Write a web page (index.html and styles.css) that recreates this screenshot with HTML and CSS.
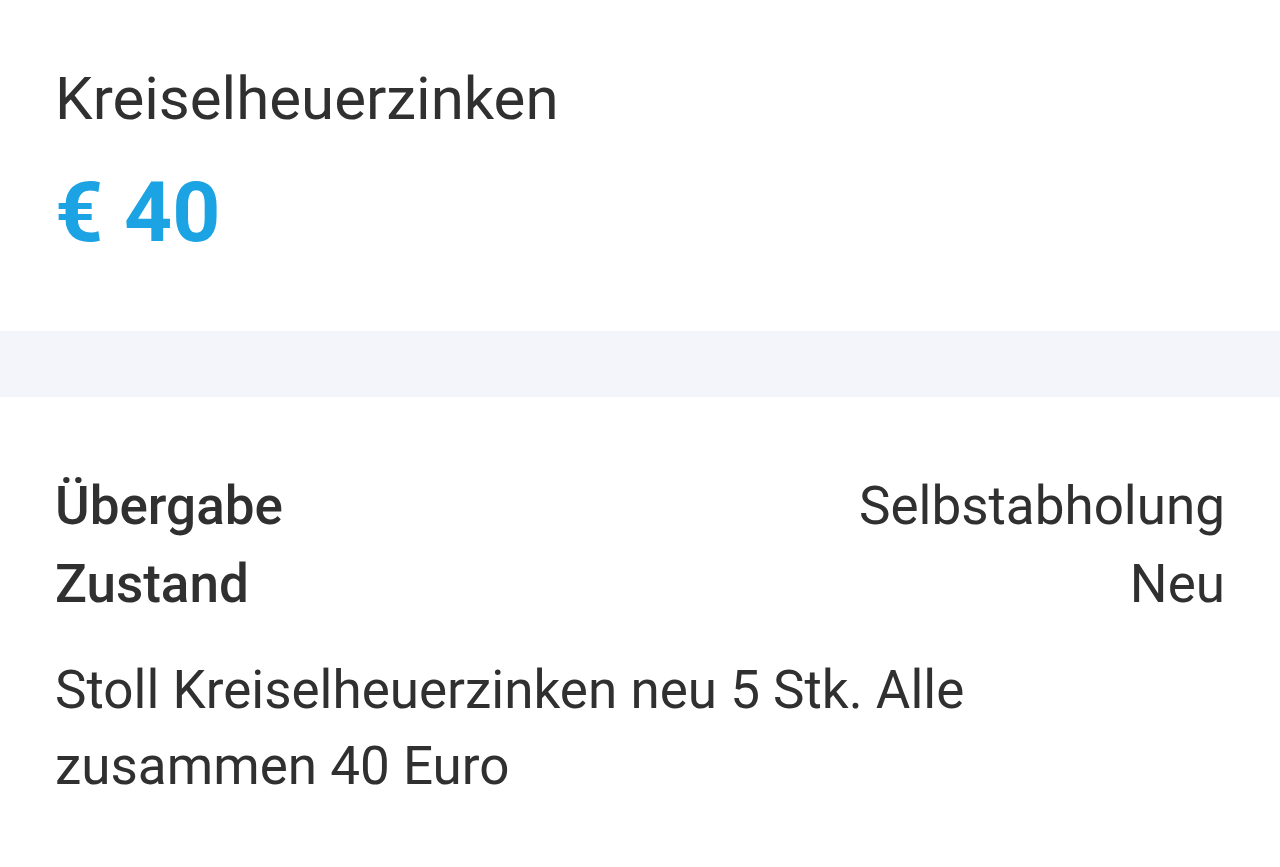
FILE: index.html
```html
<!DOCTYPE html>
<html lang="de">
<head>
<meta charset="utf-8">
<title>Kreiselheuerzinken</title>
<link rel="stylesheet" href="styles.css">
</head>
<body>
<section class="head">
  <h1 class="title">Kreiselheuerzinken</h1>
  <div class="price">€ 40</div>
</section>
<div class="band"></div>
<section class="details">
  <div class="row"><span class="label">Übergabe</span><span class="value">Selbstabholung</span></div>
  <div class="row"><span class="label">Zustand</span><span class="value">Neu</span></div>
  <p class="desc">Stoll Kreiselheuerzinken neu 5 Stk. Alle zusammen 40 Euro</p>
</section>
</body>
</html>
```
FILE: styles.css
```css
html, body {
  margin: 0;
  padding: 0;
  background: #ffffff;
}
body {
  font-family: Roboto, "Noto Sans", sans-serif;
  color: #303030;
}
.head {
  padding: 59px 55px 68px;
}
.title {
  margin: 0;
  font-size: 60px;
  line-height: 80px;
  font-weight: 400;
}
.price {
  margin-top: 24px;
  font-size: 84px;
  line-height: 100px;
  font-weight: 700;
  color: #1ba3e3;
}
.band {
  height: 66px;
  background: #f4f5fa;
}
.details {
  padding: 70px 55px 40px;
}
.row {
  display: flex;
  justify-content: space-between;
  font-size: 53px;
  line-height: 78px;
}
.label {
  font-weight: 500;
}
.value {
  font-weight: 400;
}
.desc {
  margin: 29px 0 0;
  font-size: 53px;
  line-height: 76px;
}
```
